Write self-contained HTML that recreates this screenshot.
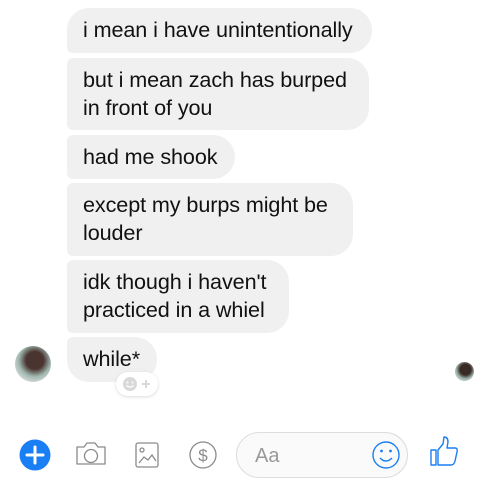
<!DOCTYPE html><html><head><style>
body{margin:0;width:480px;height:487px;background:#fff;position:relative;overflow:hidden;font-family:"Liberation Sans",Arial,sans-serif}
.b{position:absolute;left:67px;background:#f0f0f0;color:#111;font-size:21.6px;line-height:28px;padding:8px 16px;box-sizing:border-box;border-radius:6px 22px 22px 6px;white-space:nowrap;letter-spacing:-0.1px}
</style></head><body>
<div class="b" style="top:8px;width:305px;height:45px;border-top-left-radius:22px">i mean i have unintentionally</div>
<div class="b" style="top:58px;width:302px;height:72px">but i mean zach has burped<br>in front of you</div>
<div class="b" style="top:135px;width:168px;height:44px">had me shook</div>
<div class="b" style="top:183px;width:286px;height:73px">except my burps might be<br>louder</div>
<div class="b" style="top:260px;width:222px;height:73px">idk though i haven't<br>practiced in a whiel</div>
<div class="b" style="top:337px;width:90px;height:45px;border-bottom-left-radius:22px">while*</div>
<div style="position:absolute;left:15px;top:346px;width:36px;height:36px;border-radius:50%;background:radial-gradient(circle at 55% 40%,#4a3430 0 30%,#9fb8b0 55%,#ddd 80%)"></div>
<div style="position:absolute;left:455px;top:362px;width:19px;height:19px;border-radius:50%;background:radial-gradient(circle at 55% 40%,#3a2a26 0 35%,#9fb8b0 60%,#ccc 80%)"></div>
<div style="position:absolute;left:116px;top:372px;width:42px;height:24px;border-radius:12px;background:#fff;box-shadow:0 1px 3px rgba(0,0,0,.15)"></div>
<svg style="position:absolute;left:122px;top:376px" width="32" height="16"><circle cx="8" cy="8" r="7" fill="#d8d8d8"/><circle cx="5.5" cy="6.5" r="1" fill="#fff"/><circle cx="10.5" cy="6.5" r="1" fill="#fff"/><path d="M4.5 9.5q3.5 3 7 0" stroke="#fff" stroke-width="1.3" fill="none"/><path d="M24 4v8M20 8h8" stroke="#d8d8d8" stroke-width="2"/></svg>
<svg style="position:absolute;left:0;top:420px" width="480" height="67">
<circle cx="35" cy="35" r="15.5" fill="#1a7ef5"/><path d="M35 27v16M27 35h16" stroke="#fff" stroke-width="3" stroke-linecap="round"/>
<g fill="none" stroke="#8a8a8a" stroke-width="1.3">
<path d="M77 27h7l3-4h8l3 4h7v17h-28z" stroke-linejoin="round"/><circle cx="91" cy="36" r="6.5"/>
<rect x="136" y="23" width="22" height="24" rx="2"/><circle cx="142" cy="30" r="2"/><path d="M139 43l5-6 4 3 4-5 4 6"/>
<circle cx="203" cy="35" r="13"/></g>
<text x="203" y="41" font-size="17" fill="#8a8a8a" text-anchor="middle" font-family="Liberation Sans">$</text>
<rect x="236.5" y="12.5" width="171" height="45" rx="22.5" fill="#fafafa" stroke="#ddd"/>
<text x="255" y="42" font-size="20" fill="#999" font-family="Liberation Sans">Aa</text>
<g fill="none" stroke="#1a7ef5" stroke-width="1.4"><circle cx="386" cy="35" r="13"/><path d="M380 38q6 6 12 0"/></g>
<circle cx="381.5" cy="31" r="1.4" fill="#1a7ef5"/><circle cx="390.5" cy="31" r="1.4" fill="#1a7ef5"/>
<g fill="none" stroke="#1a7ef5" stroke-width="1.4" stroke-linejoin="round"><rect x="431" y="30" width="5" height="15"/><path d="M438 30l5-6 1-7q4 0 4 5l-1 6h8q3 0 2 4l-2 9q-1 4-4 4h-13z"/></g>
</svg>
</body></html>
